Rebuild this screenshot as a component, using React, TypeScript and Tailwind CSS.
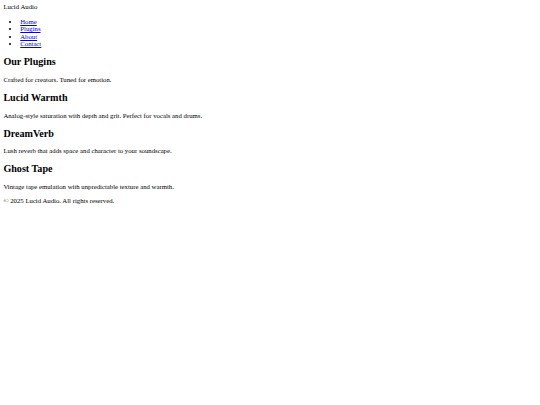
export default function App() {
  const plugins = [
    { name: "Lucid Warmth", desc: "Analog-style saturation with depth and grit. Perfect for vocals and drums." },
    { name: "DreamVerb", desc: "Lush reverb that adds space and character to your soundscape." },
    { name: "Ghost Tape", desc: "Vintage tape emulation with unpredictable texture and warmth." },
  ];
  const links = ["Home", "Plugins", "About", "Contact"];
  return (
    <div className="min-h-[405px] bg-white p-[3.375px] font-['Liberation_Serif',serif] text-[6.75px] leading-[1.12] text-black">
      <header>
        <div>Lucid Audio</div>
        <nav>
          <ul className="my-[6.75px] list-disc pl-[16.875px]">
            {links.map((l) => (
              <li key={l}>
                <a href="#" className="text-[#0000ee] underline">
                  {l}
                </a>
              </li>
            ))}
          </ul>
        </nav>
      </header>
      <main>
        <section>
          <h2 className="my-[8.4px] text-[10.125px] font-bold leading-[1.12]">Our Plugins</h2>
          <p className="my-[6.75px]">Crafted for creators. Tuned for emotion.</p>
        </section>
        {plugins.map((p) => (
          <div key={p.name}>
            <h2 className="my-[8.4px] text-[10.125px] font-bold leading-[1.12]">{p.name}</h2>
            <p className="my-[6.75px]">{p.desc}</p>
          </div>
        ))}
      </main>
      <footer>
        <p className="my-[6.75px]">© 2025 Lucid Audio. All rights reserved.</p>
      </footer>
    </div>
  );
}
